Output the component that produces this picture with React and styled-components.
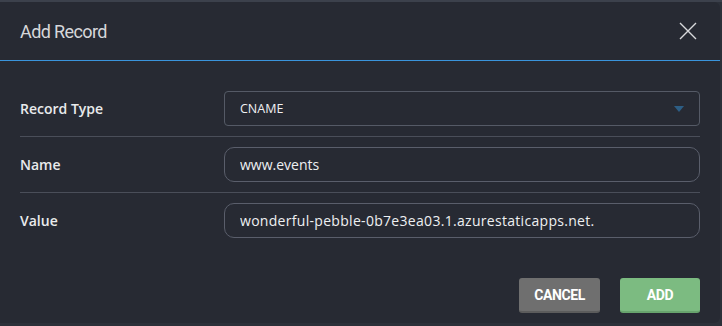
import React, { useEffect, useRef } from "react";
import styled, { createGlobalStyle } from "styled-components";

const Global = createGlobalStyle`
  html, body { margin: 0; padding: 0; background: #343944; }
  body { font-family: "Open Sans", "Noto Sans", sans-serif; }
  * { box-sizing: border-box; }
`;

const Page = styled.div`
  width: 722px;
  height: 326px;
  padding: 2px 2px 3px 0;
  background: linear-gradient(#3c414c 0 2px, #2c3039 2px);
`;

const Modal = styled.div`
  width: 720px;
  height: 321px;
  background: #272a33;
  border-radius: 0 6px 6px 0;
  display: flex;
  flex-direction: column;
  overflow: hidden;
`;

const Header = styled.div`
  height: 59px;
  display: flex;
  align-items: center;
  justify-content: space-between;
  padding: 0 23px 0 20px;
  border-bottom: 1px solid #3a94dc;
`;

const Title = styled.h2`
  margin: 0;
  font-family: Roboto, "Open Sans", sans-serif;
  font-weight: 400;
  font-size: 18px;
  letter-spacing: -0.6px;
  color: #d6d7da;
`;

const Close = styled.button`
  width: 18px;
  height: 18px;
  padding: 0;
  border: 0;
  background: none;
  display: flex;
  cursor: pointer;
`;

const Body = styled.div`
  padding: 20px 20px 0;
  display: flex;
  flex-direction: column;
`;

const Row = styled.div`
  display: grid;
  grid-template-columns: 204px 1fr;
  align-items: center;
  padding: 10px 0;
  border-bottom: ${(p) => (p.$last ? "none" : "1px solid #4a4e59")};
`;

const Label = styled.label`
  font-family: "Open Sans", sans-serif;
  font-weight: 600;
  font-size: 14px;
  color: #e9eaec;
`;

const SelectBox = styled.div`
  height: 35px;
  border: 1px solid #555a66;
  border-radius: 4px;
  display: flex;
  align-items: center;
  justify-content: space-between;
  padding: 0 15px 0 15px;
  font-family: "Open Sans", sans-serif;
  font-size: 12.5px;
  color: #f0f1f3;
`;

const Caret = styled.span`
  width: 0;
  height: 0;
  border-left: 5px solid transparent;
  border-right: 5px solid transparent;
  border-top: 6px solid #2d5e85;
`;

const Field = styled.input`
  height: 35px;
  width: 100%;
  border: 1px solid #5a5e6b;
  border-radius: 10px;
  background: transparent;
  padding: 0 15px;
  font-family: "Open Sans", sans-serif;
  font-size: 14px;
  letter-spacing: ${(p) => p.$spacing || 0}px;
  color: #eef0f2;
  outline: none;
  caret-color: #ffffff;
`;

const Footer = styled.div`
  display: flex;
  justify-content: flex-end;
  gap: 20px;
  padding: 30px 20px 10px;
`;

const Btn = styled.button`
  width: ${(p) => p.$w}px;
  height: 35px;
  border: 0;
  border-bottom: 2px solid ${(p) => p.$shade};
  border-radius: 3px;
  background: ${(p) => p.$bg};
  color: #ffffff;
  font-family: Roboto, "Open Sans", sans-serif;
  font-weight: 700;
  font-size: 14px;
  letter-spacing: -0.4px;
  cursor: pointer;
`;

export default function App() {
  const ref = useRef(null);
  useEffect(() => {
    const el = ref.current;
    if (el) {
      el.focus();
      const n = el.value.length;
      el.setSelectionRange(n, n);
    }
  }, []);
  return (
    <>
      <Global />
      <Page>
        <Modal>
          <Header>
            <Title>Add Record</Title>
            <Close aria-label="Close">
              <svg width="18" height="18" viewBox="0 0 18 18">
                <path d="M1 1L17 17M17 1L1 17" stroke="#d8d9dc" strokeWidth="1.4" fill="none" />
              </svg>
            </Close>
          </Header>
          <Body>
            <Row>
              <Label>Record Type</Label>
              <SelectBox>
                <span>CNAME</span>
                <Caret />
              </SelectBox>
            </Row>
            <Row>
              <Label>Name</Label>
              <Field defaultValue="www.events" />
            </Row>
            <Row $last>
              <Label>Value</Label>
              <Field ref={ref} $spacing={0.3} defaultValue="wonderful-pebble-0b7e3ea03.1.azurestaticapps.net." />
            </Row>
          </Body>
          <Footer>
            <Btn $w={81} $bg="#6f6f6f" $shade="#5c5c5c">CANCEL</Btn>
            <Btn $w={80} $bg="#7cbb81" $shade="#68a46d">ADD</Btn>
          </Footer>
        </Modal>
      </Page>
    </>
  );
}
